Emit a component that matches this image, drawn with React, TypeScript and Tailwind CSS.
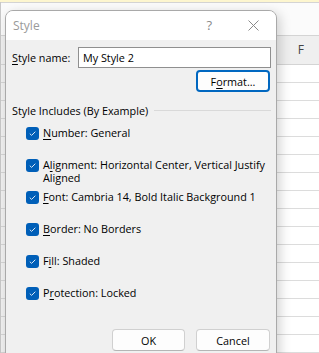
import React from "react";

function Check() {
  return (
    <span className="mt-[1px] flex h-[13px] w-[13px] shrink-0 items-center justify-center rounded-[3px] bg-[#005fb8]">
      <svg width="9" height="9" viewBox="0 0 9 9">
        <path d="M1.8 4.7 L3.6 6.4 L7.3 2.7" fill="none" stroke="#dce9f6" strokeWidth="1" />
      </svg>
    </span>
  );
}

function U({ children }: { children: React.ReactNode }) {
  return <span className="underline decoration-1 underline-offset-[2px]">{children}</span>;
}

function Row({ children }: { children: React.ReactNode }) {
  return (
    <div className="flex h-[32px] items-start gap-[4px]">
      <Check />
      <div className="leading-[13px]">{children}</div>
    </div>
  );
}

export default function App() {
  const rows = Array.from({ length: 16 });
  return (
    <div className="relative h-[353px] w-[319px] overflow-hidden bg-white font-['Open_Sans',sans-serif] text-[10.8px] text-black">
      {/* spreadsheet background */}
      <div className="flex h-full flex-col">
        <div className="h-[3px] bg-[#fdf6cf]" />
        <div className="flex flex-1">
          <div className="flex w-[5px] flex-col border-l border-[#c8c8c8]">
            <div className="h-[33px] border-t border-[#d4d4d4] bg-[#fafafa]" />
            <div className="h-[30px] border-y border-[#d4d4d4] bg-[#efefef]" />
            {rows.map((_, i) => (
              <div key={i} className="h-[18px] shrink-0 border-b border-[#d4d4d4] bg-[#f0f0f0]" />
            ))}
          </div>
          <div className="flex flex-1 flex-col">
            <div className="h-[33px] border-t border-[#d4d4d4] bg-[#fbfbfb]" />
            <div className="flex h-[30px] items-center justify-end border-y border-[#d4d4d4] bg-[#efefef] pr-[15px] text-[12px] text-[#444]">
              F
            </div>
            {rows.map((_, i) => (
              <div key={i} className="h-[18px] shrink-0 border-b border-[#dcdcdc] bg-white" />
            ))}
          </div>
        </div>
      </div>

      {/* dialog window */}
      <div className="absolute left-[5px] top-[10px] flex h-[360px] w-[272px] flex-col overflow-hidden rounded-t-[8px] border border-[#a9a9a9] bg-[#f0f0f0] shadow-[3px_3px_12px_rgba(0,0,0,0.18)]">
        <div className="flex h-[29px] shrink-0 items-center bg-white pl-[7px] text-[12px] text-[#9a9a9a]">
          <span>Style</span>
          <span className="ml-auto mr-[36px] text-[13px] text-[#8a8a8a]">?</span>
          <svg width="11" height="11" viewBox="0 0 11 11" className="mr-[17px]">
            <path d="M0.5 0.5 L10.5 10.5 M10.5 0.5 L0.5 10.5" stroke="#8a8a8a" strokeWidth="1" />
          </svg>
        </div>

        <div className="flex flex-col pl-[6px] pr-[5px] pt-[7px]">
          <div className="flex h-[21px] items-center">
            <div className="w-[66px] leading-[13px]">
              <U>S</U>tyle name:
            </div>
            <div className="flex h-[21px] flex-1 items-center border border-[#8f8f8f] bg-white px-[4px] leading-[13px]">
              My Style 2
            </div>
          </div>

          <button className="mt-[2px] mr-[1px] flex h-[22px] w-[74px] items-center justify-center self-end rounded-[4px] border-2 border-[#0067c0] bg-[#fdfdfd] leading-[13px]">
            F<U>o</U>rmat...
          </button>

          <div className="mt-[12px] flex items-center">
            <span className="leading-[13px]">Style Includes (By Example)</span>
            <div className="ml-[6px] h-px flex-1 bg-[#d9d9d9]" />
          </div>

          <div className="mt-[9px] flex flex-col pl-[14px]">
            <Row>
              <U>N</U>umber: General
            </Row>
            <Row>
              <div className="h-[13px]">
                A<U>l</U>ignment: Horizontal Center, Vertical Justify
              </div>
              <div className="h-[13px]">Aligned</div>
            </Row>
            <Row>
              <U>F</U>ont: Cambria 14, Bold Italic Background 1
            </Row>
            <Row>
              <U>B</U>order: No Borders
            </Row>
            <Row>
              F<U>i</U>ll: Shaded
            </Row>
            <Row>
              P<U>r</U>otection: Locked
            </Row>
          </div>

          <div className="mt-[11px] flex justify-end gap-[11px] pr-[1px]">
            <button className="flex h-[22px] w-[73px] items-center justify-center rounded-[4px] border border-[#d0d0d0] border-b-[#b5b5b5] bg-[#fdfdfd] leading-[13px]">
              OK
            </button>
            <button className="flex h-[22px] w-[74px] items-center justify-center rounded-[4px] border border-[#d0d0d0] border-b-[#b5b5b5] bg-[#fdfdfd] leading-[13px]">
              Cancel
            </button>
          </div>
        </div>
      </div>
    </div>
  );
}
